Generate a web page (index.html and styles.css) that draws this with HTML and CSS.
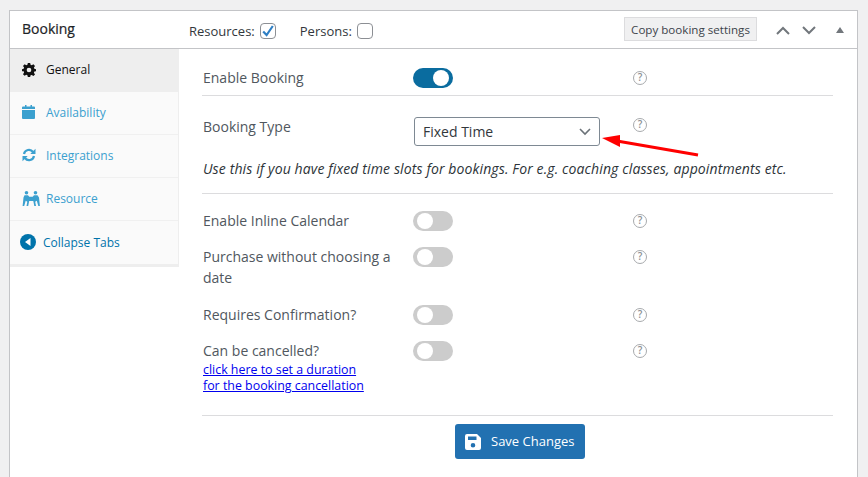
FILE: index.html
```html
<!DOCTYPE html>
<html lang="en">
<head>
<meta charset="utf-8">
<title>Booking</title>
<link rel="stylesheet" href="styles.css">
</head>
<body>
<div class="card">
  <header class="head">
    <h2 class="title">Booking</h2>
    <div class="checks">
      <label class="check">Resources:
        <span class="box"><svg viewBox="0 0 16 16" width="16" height="16"><path d="M3.2 8.4 6.6 12 12.8 3" fill="none" stroke="#2f7fc4" stroke-width="2.2"/></svg></span>
      </label>
      <label class="check">Persons: <span class="box"></span></label>
    </div>
    <div class="tools">
      <span class="copy">Copy booking settings</span>
      <svg class="chev" viewBox="0 0 14 9" width="14" height="9"><path d="M1 8 7 2l6 6" fill="none" stroke="#72777c" stroke-width="2"/></svg>
      <svg class="chev" viewBox="0 0 14 9" width="14" height="9"><path d="M1 1l6 6 6-6" fill="none" stroke="#72777c" stroke-width="2"/></svg>
      <svg class="tri" viewBox="0 0 8 6" width="8" height="6"><path d="M4 0l4 6H0z" fill="#72777c"/></svg>
    </div>
  </header>
  <div class="body">
    <nav class="side">
      <a class="tab active">
        <svg class="ti" viewBox="0 0 24 24" width="14" height="14"><path fill="#111" fill-rule="evenodd" d="M10 0h4l.7 3.2 2 .8L19.500 2.300l2.800 2.800L20.400 7.900l.8 2L24 10.500v3.500l-2.800.7-.8 2 1.900 2.800-2.800 2.800-2.800-1.900-2 .8L14 24h-4l-.7-3.200-2-.8-2.800 1.900-2.800-2.800 1.900-2.800-.8-2L0 14v-3.500l2.800-.6.800-2-1.900-2.800 2.800-2.800L7.300 4l2-.8zM12 8a4 4 0 1 0 0 8 4 4 0 0 0 0-8z"/></svg>
        General</a>
      <a class="tab">
        <svg class="ti" viewBox="0 0 14 14" width="14" height="14"><path fill="#3ba0cf" d="M0 5h13v8a1 1 0 0 1-1 1H1a1 1 0 0 1-1-1zM1 1.500h2V0h1.500v1.500h4V0H10v1.500h2a1 1 0 0 1 1 1V4H0V2.500a1 1 0 0 1 1-1z"/></svg>
        Availability</a>
      <a class="tab">
        <svg class="ti" viewBox="0 0 14 14" width="14" height="14"><path fill="none" stroke="#3ba0cf" stroke-width="2.200" d="M2 6a5 5 0 0 1 9-2M12 8a5 5 0 0 1-9 2"/><path fill="#3ba0cf" d="M13.500 .8V6H8.300zM.5 13.200V8h5.200z"/></svg>
        Integrations</a>
      <a class="tab">
        <svg class="ti wide" viewBox="0 0 18 15" width="18" height="15"><g fill="#3ba0cf"><circle cx="4.500" cy="1.800" r="1.800"/><circle cx="13.500" cy="1.800" r="1.800"/><path d="M2.500 4.200h3.500l1.300 1.600h3.400l1.300-1.600h3.500l1.500 2.300.9 8.500h-1.600l-1.500-5.200-1.600 1 .8 4.200h-1.700l-1-5H7.200l-1 5H4.500l.8-4.200-1.600-1L2.200 15H.600l.9-8.500z"/><path d="M6.800 6.800h4.400v3H6.800z"/></g></svg>
        Resource</a>
      <a class="tab collapse">
        <svg class="ci" viewBox="0 0 16 16" width="16" height="16"><circle cx="8" cy="8" r="8" fill="#0073aa"/><path d="M10.500 4v8L5 8z" fill="#fff"/></svg>
        Collapse Tabs</a>
    </nav>
    <main class="main">
      <div class="row first">
        <span class="lab">Enable Booking</span>
        <span class="toggle on"></span>
        <span class="help">?</span>
      </div>
      <div class="type">
        <div class="row typerow">
          <span class="lab">Booking Type</span>
          <span class="select">Fixed Time
            <svg viewBox="0 0 12 8" width="12" height="8"><path d="M1 1l5 5 5-5" fill="none" stroke="#6b7278" stroke-width="1.600"/></svg>
          </span>
          <span class="help">?</span>
        </div>
        <p class="desc">Use this if you have fixed time slots for bookings. For e.g. coaching classes, appointments etc.</p>
      </div>
      <div class="group">
        <div class="row r1"><span class="lab">Enable Inline Calendar</span><span class="toggle"></span><span class="help">?</span></div>
        <div class="row r2"><span class="lab">Purchase without choosing a date</span><span class="toggle"></span><span class="help">?</span></div>
        <div class="row r3"><span class="lab">Requires Confirmation?</span><span class="toggle"></span><span class="help">?</span></div>
        <div class="row r4">
          <span class="lab">Can be cancelled?
            <a class="link" href="#">click here to set a duration<br>for the booking cancellation</a>
          </span>
          <span class="toggle"></span><span class="help">?</span>
        </div>
      </div>
      <div class="foot">
        <button class="save" type="button">
          <svg viewBox="0 0 16 16" width="16" height="16"><path fill="#fff" fill-rule="evenodd" d="M2 0h10l4 4v10a2 2 0 0 1-2 2H2a2 2 0 0 1-2-2V2a2 2 0 0 1 2-2zM3 2.500V6h8.500V2.500zM8 9a2.300 2.300 0 1 0 0 4.600A2.300 2.300 0 0 0 8 9z"/></svg>
          <span class="savetxt">Save Changes</span>
        </button>
      </div>
    </main>
  </div>
  <svg class="arrow" viewBox="0 0 100 30" width="100" height="30"><path d="M97 23 16 9" stroke="#f00" stroke-width="3" fill="none"/><path d="M1 6l18-3v12z" fill="#f00"/></svg>
</div>
</body>
</html>
```
FILE: styles.css
```css
* { box-sizing: border-box; }
html, body { margin: 0; height: 477px; overflow: hidden; }
body {
  background: #f0f0f1;
  font-family: "Open Sans", sans-serif;
  font-size: 14px;
  color: #50575e;
  padding: 10px 10px 0 9px;
}
.card {
  position: relative;
  background: #fff;
  border: 1px solid #c3c4c7;
  border-bottom: 0;
  height: 467px;
}
.head {
  display: flex;
  align-items: center;
  height: 38px;
  border-bottom: 1px solid #c3c4c7;
}
.title {
  margin: 0;
  width: 179px;
  padding-left: 12px;
  font-size: 14px;
  line-height: 18px;
  font-weight: 400;
  color: #1d2327;
  position: relative;
  top: -1px;
  -webkit-text-stroke: 0.2px #1d2327;
}
.checks { display: flex; gap: 24px; padding-top: 2px; }
.check {
  display: flex;
  align-items: center;
  gap: 5px;
  color: #32373c;
  font-size: 13px;
  line-height: 18px;
}
.box {
  width: 16px;
  height: 16px;
  border: 1px solid #8c8f94;
  border-radius: 4px;
  display: block;
  background: #fff;
}
.box svg { display: block; margin: -1px; }
.tools { margin-left: auto; display: flex; align-items: center; padding-right: 13px; }
.copy {
  background: #f0f0f1;
  border: 1px solid #dcdcde;
  height: 24px;
  width: 133px;
  text-align: center;
  font-size: 11.600px;
  line-height: 24px;
  color: #3c434a;
  margin-right: 19px;
  position: relative;
  top: -1px;
}
.chev { margin-right: 12px; margin-top: 2px; }
.tri { margin-left: 8px; }
.body { display: flex; height: 428px; }
.side {
  width: 169px;
  height: 218px;
  background: #fafafa;
  border-right: 1px solid #eee;
  border-bottom: 3px solid #eee;
  flex: none;
}
.tab {
  display: flex;
  align-items: center;
  height: 43px;
  padding: 0 0 2px 12px;
  gap: 10px;
  font-size: 12px;
  color: #3ba0cf;
  border-bottom: 1px solid #f0f0f0;
}
.ti { flex: none; }
.ti.wide { margin-right: -4px; }
.active { color: #111; background: #eee; border-bottom: 0; }
.collapse { padding-left: 10px; gap: 7px; color: #0073aa; height: 44px; border-bottom: 0; }
.main { flex: 1; padding: 0 24px 0 23px; }
.row { display: grid; grid-template-columns: 211px 220px 20px; }
.lab { line-height: 22px; font-size: 14px; padding-left: 1px; position: relative; top: -1px; }
.first { padding-top: 19px; height: 47px; border-bottom: 1px solid #dcdcde; }
.toggle {
  display: block;
  position: relative;
  width: 40px;
  height: 20px;
  border-radius: 10px;
  background: #ccc;
}
.toggle::after {
  content: "";
  position: absolute;
  left: 4px;
  top: 2px;
  width: 16px;
  height: 16px;
  border-radius: 50%;
  background: #fff;
}
.toggle.on { background: #0a6c9f; }
.toggle.on::after { left: 20px; }
.help {
  width: 14px;
  height: 14px;
  border: 1.500px solid #a7aaad;
  border-radius: 50%;
  font-size: 10px;
  line-height: 11px;
  font-weight: 600;
  color: #8c8f94;
  text-align: center;
  margin-top: 3px;
}
.type { height: 98px; padding-top: 20px; border-bottom: 1px solid #dcdcde; }
.typerow .help { margin-top: 2px; }
.typerow .lab { top: 0; }
.select {
  display: flex;
  align-items: center;
  justify-content: space-between;
  margin: 1px 0 0 1px;
  width: 186px;
  height: 29px;
  padding: 0 8px;
  border: 1px solid #7e8993;
  border-radius: 3px;
  font-size: 14px;
  color: #32373c;
}
.desc {
  margin: 13px 0 0;
  padding-left: 1px;
  font-size: 14px;
  line-height: 20px;
  font-style: italic;
  font-weight: 500;
  letter-spacing: 0.125px;
  color: #2c3338;
  white-space: nowrap;
}
.group { height: 222px; padding-top: 17px; border-bottom: 1px solid #dcdcde; }
.r1 { height: 36px; }
.r2 { height: 58px; }
.r3 { height: 36px; }
.r2 .lab { padding-right: 15px; line-height: 21px; }
.link {
  display: block;
  font-size: 12.400px;
  line-height: 16px;
  color: #00e;
  margin-top: 0;
}
.foot { display: flex; justify-content: center; padding-top: 8px; padding-left: 5px; }
.save {
  display: flex;
  align-items: center;
  gap: 10px;
  width: 130px;
  height: 35px;
  padding: 0 0 0 10px;
  border: 0;
  border-radius: 3px;
  background: #2271b1;
  color: #fff;
  font: 13px "Open Sans", sans-serif;
}
.savetxt { position: relative; top: -1px; }
.arrow { position: absolute; left: 591px; top: 121px; }
```
